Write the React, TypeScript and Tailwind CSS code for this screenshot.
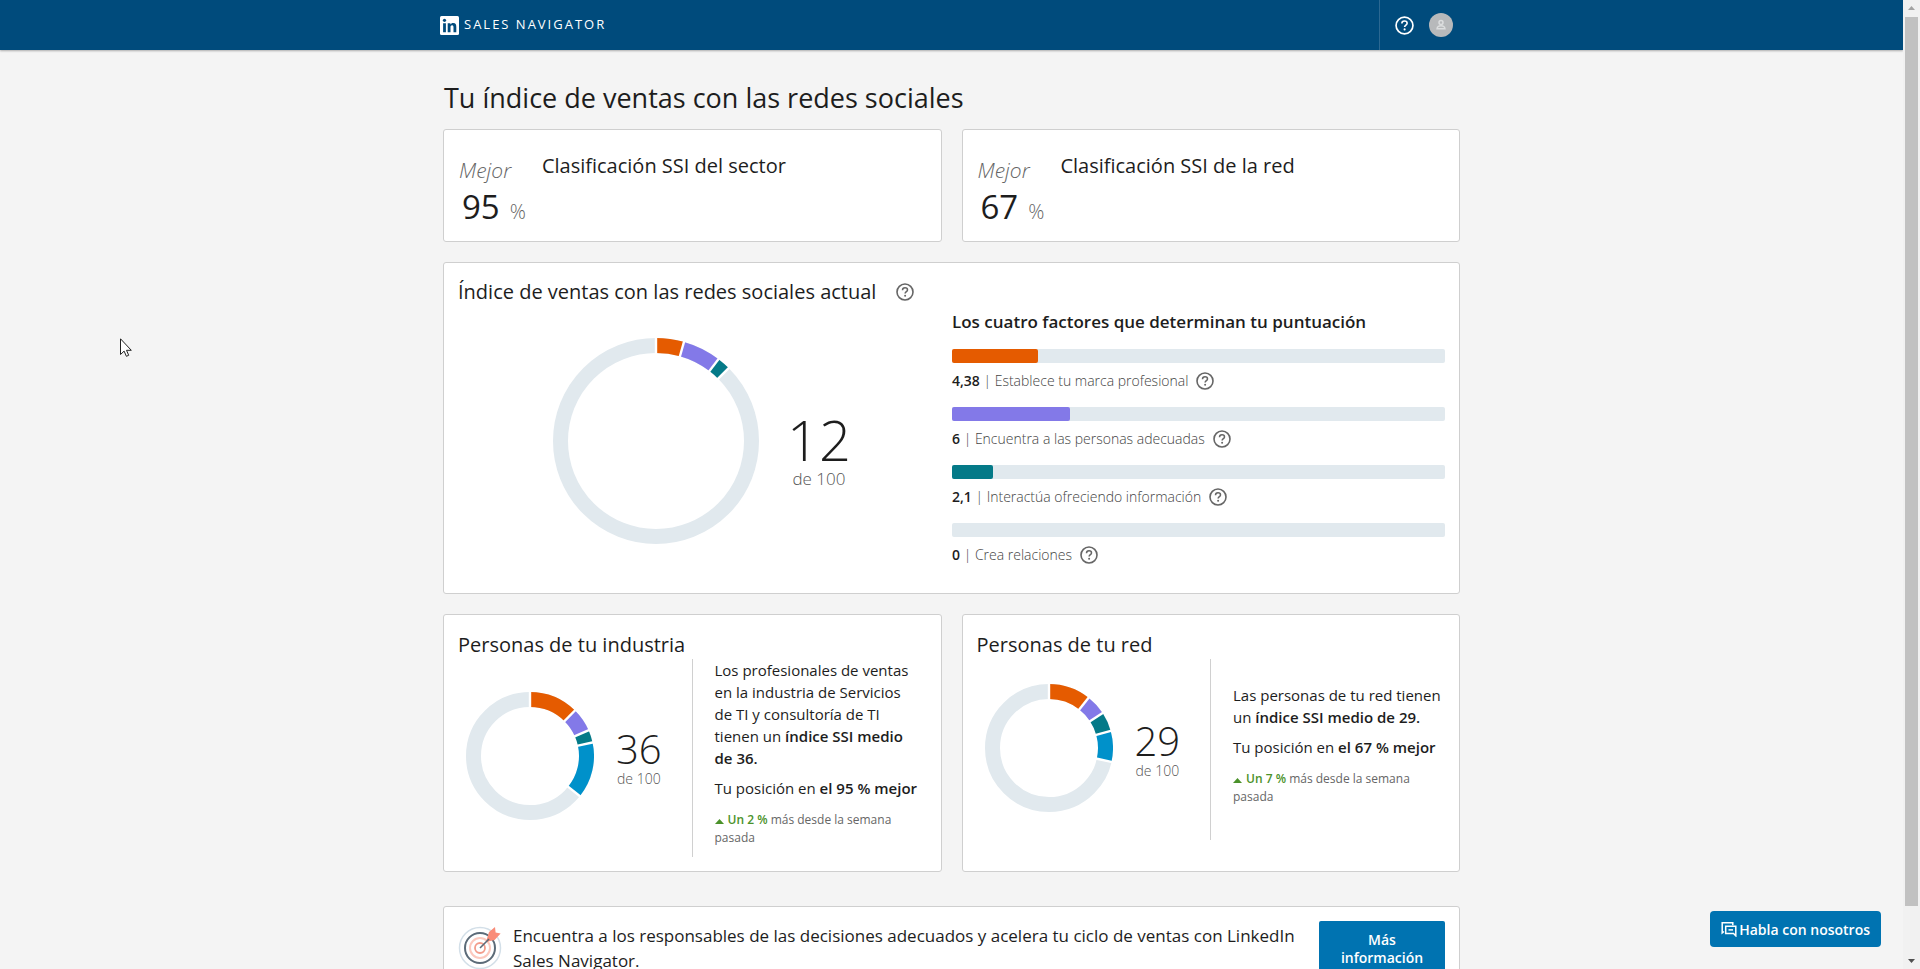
import React from 'react';
import clsx from 'clsx';

interface Segment {
  value: number;
  color: string;
}

interface DonutProps {
  segments: Segment[];
  radius: number;
}

const ORANGE = '#e55b00';
const PURPLE = '#8379e8';
const TEAL = '#047a88';
const BLUE = '#0091ca';

const factors = [
  { id: 'brand', score: 4.38, label: 'Establece tu marca profesional', bar: 'bg-[#e55b00]' },
  { id: 'people', score: 6, label: 'Encuentra a las personas adecuadas', bar: 'bg-[#8379e8]' },
  { id: 'insights', score: 2.1, label: 'Interactúa ofreciendo información', bar: 'bg-[#047a88]' },
  { id: 'relations', score: 0, label: 'Crea relaciones', bar: 'bg-[#0091ca]' },
];

const rankings = [
  { title: 'Clasificación SSI del sector', value: 95 },
  { title: 'Clasificación SSI de la red', value: 67 },
];

const HelpIcon: React.FC<{ className?: string }> = ({ className }) => (
  <svg viewBox="0 0 18 18" fill="none" stroke="currentColor" className={clsx('shrink-0', className)}>
    <circle cx="9" cy="9" r="8" strokeWidth="1.6" />
    <path d="M6.5 7.2c0-1.5 1-2.4 2.5-2.4s2.5.9 2.5 2.1c0 1.6-2.4 1.8-2.4 3.6" strokeWidth="1.5" />
    <circle cx="9.1" cy="12.7" r="1" fill="currentColor" stroke="none" />
  </svg>
);

const HelpButton: React.FC<{ label: string }> = ({ label }) => (
  <button type="button" aria-label={label} className="flex text-[#666]">
    <HelpIcon className="w-[18px] h-[18px]" />
  </button>
);

// Ring chart on a scale of 100, starting at twelve o'clock
const Donut: React.FC<DonutProps> = ({ segments, radius }) => {
  const mid = radius - 7.5;
  const length = 2 * Math.PI * mid;
  const starts = segments.map((_, i) => segments.slice(0, i).reduce((sum, s) => sum + s.value, 0));
  const total = segments.reduce((sum, s) => sum + s.value, 0);

  return (
    <svg
      width={radius * 2}
      height={radius * 2}
      viewBox={`${-radius} ${-radius} ${radius * 2} ${radius * 2}`}
      className="shrink-0"
      aria-hidden="true"
    >
      <circle r={mid} fill="none" stroke="#e1e9ee" strokeWidth="15" />
      {segments.map((s, i) => (
        <circle
          key={s.color}
          r={mid}
          fill="none"
          stroke={s.color}
          strokeWidth="15"
          strokeDasharray={`${(s.value / 100) * length} ${length}`}
          transform={`rotate(${starts[i] * 3.6 - 90})`}
        />
      ))}
      {[...starts, total].map((at) => (
        <line
          key={at}
          x1="0"
          x2="0"
          y1={-radius - 1}
          y2={16 - radius}
          stroke="#fff"
          strokeWidth="2.4"
          transform={`rotate(${at * 3.6})`}
        />
      ))}
    </svg>
  );
};

const Card: React.FC<{ className?: string; children: React.ReactNode }> = ({ className, children }) => (
  <section className={clsx('bg-white border border-[#cfcfcf] rounded-[3px]', className)}>{children}</section>
);

interface PeopleCardProps {
  title: string;
  score: number;
  segments: Segment[];
  rank: number;
  change: number;
  children: React.ReactNode;
}

const PeopleCard: React.FC<PeopleCardProps> = ({ title, score, segments, rank, change, children }) => (
  <Card className="flex-1 px-[14px] pt-4 pb-[14px]">
    <h2 className="text-[20px] leading-7">{title}</h2>
    <div className="flex min-h-[181px]">
      <div className="flex-1 flex items-center gap-[22px] pl-2 pb-1">
        <Donut radius={64} segments={segments} />
        <div className="flex flex-col items-center pt-[6px]">
          <span className="text-[40px] leading-10 font-light">{score}</span>
          <span className="text-[14px] leading-5 font-light text-[#555]">de 100</span>
        </div>
      </div>
      <div className="w-[235px] shrink-0 border-l border-[#d0d0d0] pl-[22px] pb-[10px] flex flex-col justify-center">
        <p className="text-[15px] leading-[22px]">{children}</p>
        <p className="text-[15px] leading-[22px] mt-2">
          Tu posición en <b className="font-semibold">el {rank} % mejor</b>
        </p>
        <p className="text-[12px] leading-[18px] mt-3 text-[#666]">
          <svg viewBox="0 0 9 5" className="inline-block w-[9px] h-[5px] mr-1 align-baseline">
            <path d="M0 5 4.5 0 9 5z" fill="#4b922a" />
          </svg>
          <b className="font-semibold text-[#4b922a]">Un {change} %</b> más desde la semana pasada
        </p>
      </div>
    </div>
  </Card>
);

const TargetIcon = () => (
  <svg viewBox="0 0 44 44" fill="none" className="w-11 h-11 shrink-0" aria-hidden="true">
    <circle cx="22" cy="22" r="20.5" stroke="#d3dfe8" strokeWidth="1.5" />
    <circle cx="22" cy="22" r="15" stroke="#5c6b78" strokeWidth="2" />
    <circle cx="22" cy="22" r="10" stroke="#fcc9be" strokeWidth="2" />
    <circle cx="22" cy="22" r="5" stroke="#f29c8b" strokeWidth="1.8" />
    <path d="M28 16 31 6 37 1l.6 5.4 5 1.1-6 6.500z" fill="#f98c79" />
    <path d="M22 22 31 13" stroke="#5c6b78" strokeWidth="1.6" />
  </svg>
);

const App: React.FC = () => {
  return (
    <div className="h-screen flex overflow-hidden bg-[#f4f4f4] text-[#1d1d1d] font-['Open_Sans',sans-serif]">
      <div className="flex-1 min-w-0 overflow-hidden">
        <header className="bg-[#004b7c] shadow-[0_1px_2px_rgba(0,0,0,0.3)]">
          <div className="max-w-[1023px] mx-auto h-[50px] flex items-center justify-between">
            <a href="#inicio" className="flex items-center gap-[5px] text-white">
              <svg viewBox="0 0 19 19" className="w-[19px] h-[19px]" aria-label="LinkedIn">
                <rect width="19" height="19" rx="1.5" fill="#fff" />
                <circle cx="4.5" cy="4.3" r="1.6" fill="#004b7c" />
                <path
                  d="M3.1 7.2h2.8v9H3.1zM7.7 7.2h2.7v1.3c.5-.9 1.5-1.5 2.8-1.5 2.5 0 3.1 1.6 3.1 3.9v5.3h-2.8v-4.7c0-1.2-.1-2.3-1.4-2.3s-1.6 1-1.6 2.2v4.8H7.7z"
                  fill="#004b7c"
                />
              </svg>
              <span className="text-[13px] font-medium tracking-[2px]">SALES NAVIGATOR</span>
            </a>
            <div className="self-stretch flex items-center gap-[15px] border-l border-[#2b6892] pl-[15px] pr-[10px]">
              <button type="button" aria-label="Ayuda" className="flex text-white">
                <HelpIcon className="w-[19px] h-[19px]" />
              </button>
              <button type="button" aria-label="Perfil" className="flex">
                <svg viewBox="0 0 24 24" className="w-6 h-6">
                  <circle cx="12" cy="12" r="12" fill="#b7b9bb" />
                  <circle cx="12" cy="9.5" r="2" fill="none" stroke="#dcdedf" strokeWidth="1.5" />
                  <path d="M8 15.8c.3-2 1.7-3 4-3s3.7 1 4 3z" fill="none" stroke="#dcdedf" strokeWidth="1.4" />
                </svg>
              </button>
            </div>
          </div>
        </header>

        <main className="max-w-[1017px] mx-auto pt-7">
          <h1 className="text-[27px] leading-10 mb-[11px] pl-px">Tu índice de ventas con las redes sociales</h1>

          <div className="flex gap-5 mb-5">
            {rankings.map((item) => (
              <Card key={item.title} className="flex-1 flex gap-4 px-[15px] pt-[22px] pb-[11px]">
                <div>
                  <p className="text-[21px] leading-9 italic font-light text-[#666]">Mejor</p>
                  <p className="pl-[3px] flex items-baseline gap-[10px] leading-[37px]">
                    <span className="text-[33px]">{item.value}</span>
                    <span className="text-[20px] font-light text-[#666]">%</span>
                  </p>
                </div>
                <h2 className="text-[20px] leading-7">{item.title}</h2>
              </Card>
            ))}
          </div>

          <Card className="flex mb-5 px-[14px] pt-[15px] pb-3">
            <div className="flex-1">
              <div className="flex items-center gap-5">
                <h2 className="text-[20px] leading-7">Índice de ventas con las redes sociales actual</h2>
                <HelpButton label="Índice de ventas con las redes sociales" />
              </div>
              <div className="flex items-center gap-7 pl-[95px] pt-8">
                <Donut
                  radius={103}
                  segments={[
                    { value: 4.38, color: ORANGE },
                    { value: 6, color: PURPLE },
                    { value: 2.1, color: TEAL },
                  ]}
                />
                <div className="flex flex-col items-center pt-5">
                  <span className="text-[56px] leading-[56px] font-light">12</span>
                  <span className="text-[17px] leading-6 font-light text-[#555]">de 100</span>
                </div>
              </div>
            </div>

            <div className="w-[493px] pt-8">
              <h3 className="text-[17px] leading-6 font-semibold">Los cuatro factores que determinan tu puntuación</h3>
              <ul className="pt-[15px]">
                {factors.map((factor) => (
                  <li key={factor.id} className="h-[58px]">
                    <div className="h-[14px] bg-[#e1e9ee] rounded-[2px]">
                      <div
                        className={clsx('h-full rounded-[2px]', factor.bar)}
                        style={{ width: `${(factor.score / 25) * 100}%` }}
                      />
                    </div>
                    <div className="flex items-center gap-2 mt-[7px]">
                      <p className="text-[14px] leading-[22px] font-light text-[#444]">
                        <b className="font-semibold text-[#1d1d1d]">{factor.score.toString().replace('.', ',')}</b>
                        {' | '}
                        {factor.label}
                      </p>
                      <HelpButton label={factor.label} />
                    </div>
                  </li>
                ))}
              </ul>
            </div>
          </Card>

          <div className="flex gap-5 mb-[34px]">
            <PeopleCard
              title="Personas de tu industria"
              score={36}
              rank={95}
              change={2}
              segments={[
                { value: 12.4, color: ORANGE },
                { value: 6, color: PURPLE },
                { value: 3.2, color: TEAL },
                { value: 14.2, color: BLUE },
              ]}
            >
              Los profesionales de ventas en la industria de Servicios de&nbsp;TI y consultoría de&nbsp;TI tienen un{' '}
              <b className="font-semibold">índice SSI medio de&nbsp;36.</b>
            </PeopleCard>
            <PeopleCard
              title="Personas de tu red"
              score={29}
              rank={67}
              change={7}
              segments={[
                { value: 10.6, color: ORANGE },
                { value: 5.2, color: PURPLE },
                { value: 4.9, color: TEAL },
                { value: 7.8, color: BLUE },
              ]}
            >
              Las personas de tu red tienen un <b className="font-semibold">índice SSI medio de 29.</b>
            </PeopleCard>
          </div>

          <Card className="flex items-start px-[14px] py-[14px]">
            <div className="pt-[5px]">
              <TargetIcon />
            </div>
            <p className="flex-1 pl-[11px] pt-[2px] text-[17px] leading-[25px]">
              Encuentra a los responsables de las decisiones adecuados y acelera tu ciclo de ventas con LinkedIn Sales
              Navigator.
            </p>
            <a
              href="#mas-informacion"
              className="w-[126px] ml-2 px-5 py-[10px] bg-[#0073b1] rounded-[2px] text-white text-center text-[14px] leading-[18px] font-semibold"
            >
              Más información
            </a>
          </Card>
        </main>
      </div>

      <div className="w-[17px] shrink-0 bg-[#f1f1f1] flex flex-col items-center justify-between py-[6px]" aria-hidden="true">
        <svg viewBox="0 0 7 4" className="w-[7px] h-1">
          <path d="M0 4 3.5 0 7 4z" fill="#a3a3a3" />
        </svg>
        <div className="w-[13px] flex-1 mt-[7px] mb-[53px] bg-[#c1c1c1]" />
        <svg viewBox="0 0 7 4" className="w-[7px] h-1">
          <path d="M0 0 3.5 4 7 0z" fill="#505050" />
        </svg>
      </div>

      <button
        type="button"
        className="fixed right-[39px] bottom-[22px] h-9 px-[11px] flex items-center gap-[2px] rounded bg-[#0073b1] text-white text-[14px] font-semibold"
      >
        <svg viewBox="0 0 16 16" fill="none" stroke="currentColor" strokeWidth="1.5" className="w-4 h-4">
          <path d="M3 10.5 1.2 12V1.7h10.6v2.5" />
          <path d="M4.7 5.2h10.1v9.6l-2.3-2.3H4.7z" />
          <path d="M7.5 8.9h4.5" />
        </svg>
        Habla con nosotros
      </button>

      <svg viewBox="0 0 12 19" className="fixed left-[120px] top-[338px] w-3 h-[19px]" aria-hidden="true">
        <path d="M.5.8v15.7l3.6-3.4 2.3 5.2 2.3-1-2.2-5h4.8z" fill="#fff" stroke="#222" strokeWidth="1" />
      </svg>
    </div>
  );
};

export default App;
